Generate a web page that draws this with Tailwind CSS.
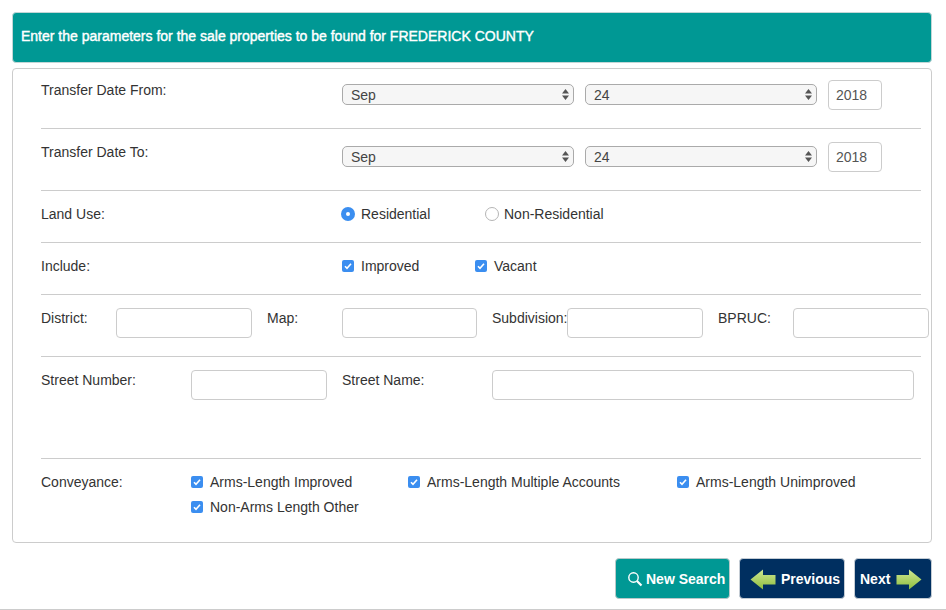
<!DOCTYPE html>
<html lang="en">
<head>
    <meta charset="UTF-8">
    <title>Sales Search</title>
    <script src="https://cdn.jsdelivr.net/npm/@tailwindcss/browser@4"></script>
</head>
<body class="bg-white text-[14px] leading-[20px] text-[#333] font-['Liberation_Sans',Arial,sans-serif]">
<div class="h-[610px] w-[946px] overflow-hidden border-b border-[#ccc] px-[12px] pt-[12px]">

    <!-- Header -->
    <div class="flex h-[51px] w-[920px] items-center rounded-[4px] border border-[#c2d6d6] bg-[#009894] pb-[4px] pl-[8px] text-white [-webkit-text-stroke:0.4px_white]">
        Enter the parameters for the sale properties to be found for FREDERICK COUNTY
    </div>

    <!-- Form panel -->
    <div class="mt-[5px] h-[475px] w-[920px] rounded-[4px] border border-[#ccc] pl-[28px]">

        <div class="flex h-[60px] w-[880px] items-start border-b border-[#ccc] pt-[11px]">
            <div class="w-[301px] shrink-0">Transfer Date From:</div>
            <div class="relative mt-[4px] h-[21px] w-[232px] shrink-0">
                <select class="h-full w-full appearance-none rounded-[5px] border border-[#aaa] bg-[#f6f6f6] pl-[8px] text-[14px] text-[#444]"><option>Sep</option></select>
                <svg class="pointer-events-none absolute right-[5px] top-[5px]" width="7" height="11" viewBox="0 0 7 11"><path d="M3.5 0L7 4.5H0Z M3.5 11L0 6.5H7Z" fill="#555"/></svg>
            </div>
            <div class="relative ml-[11px] mt-[4px] h-[21px] w-[232px] shrink-0">
                <select class="h-full w-full appearance-none rounded-[5px] border border-[#aaa] bg-[#f6f6f6] pl-[8px] text-[14px] text-[#444]"><option>24</option></select>
                <svg class="pointer-events-none absolute right-[5px] top-[5px]" width="7" height="11" viewBox="0 0 7 11"><path d="M3.5 0L7 4.5H0Z M3.5 11L0 6.5H7Z" fill="#555"/></svg>
            </div>
            <input type="text" value="2018" class="ml-[11px] h-[30px] w-[54px] shrink-0 rounded-[4px] border border-[#ccc] pl-[7px] text-[14px] text-[#555]">
        </div>

        <div class="flex h-[62px] w-[880px] items-start border-b border-[#ccc] pt-[13px]">
            <div class="w-[301px] shrink-0">Transfer Date To:</div>
            <div class="relative mt-[4px] h-[21px] w-[232px] shrink-0">
                <select class="h-full w-full appearance-none rounded-[5px] border border-[#aaa] bg-[#f6f6f6] pl-[8px] text-[14px] text-[#444]"><option>Sep</option></select>
                <svg class="pointer-events-none absolute right-[5px] top-[5px]" width="7" height="11" viewBox="0 0 7 11"><path d="M3.5 0L7 4.5H0Z M3.5 11L0 6.5H7Z" fill="#555"/></svg>
            </div>
            <div class="relative ml-[11px] mt-[4px] h-[21px] w-[232px] shrink-0">
                <select class="h-full w-full appearance-none rounded-[5px] border border-[#aaa] bg-[#f6f6f6] pl-[8px] text-[14px] text-[#444]"><option>24</option></select>
                <svg class="pointer-events-none absolute right-[5px] top-[5px]" width="7" height="11" viewBox="0 0 7 11"><path d="M3.5 0L7 4.5H0Z M3.5 11L0 6.5H7Z" fill="#555"/></svg>
            </div>
            <input type="text" value="2018" class="ml-[11px] h-[30px] w-[54px] shrink-0 rounded-[4px] border border-[#ccc] pl-[7px] text-[14px] text-[#555]">
        </div>

        <div class="flex h-[52px] w-[880px] items-start border-b border-[#ccc] pt-[13px]">
            <div class="w-[300px] shrink-0">Land Use:</div>
            <label class="flex w-[144px] shrink-0 items-center gap-[6px]">
                <span class="flex h-[14px] w-[14px] items-center justify-center rounded-full bg-[#3b8ef0]"><span class="h-[4px] w-[4px] rounded-full bg-white"></span></span>
                Residential
            </label>
            <label class="flex items-center gap-[5px]">
                <span class="h-[14px] w-[14px] rounded-full border border-[#b5b5b5] bg-white"></span>
                Non-Residential
            </label>
        </div>

        <div class="flex h-[52px] w-[880px] items-start border-b border-[#ccc] pt-[13px]">
            <div class="w-[301px] shrink-0">Include:</div>
            <label class="flex w-[133px] shrink-0 items-center gap-[7px]">
                <svg width="12" height="12" viewBox="0 0 12 12"><rect width="12" height="12" rx="2" fill="#3b8ef0"/><path d="M3 6.2L5 8.3L9 3.8" fill="none" stroke="#fff" stroke-width="1.6"/></svg>
                Improved
            </label>
            <label class="flex items-center gap-[7px]">
                <svg width="12" height="12" viewBox="0 0 12 12"><rect width="12" height="12" rx="2" fill="#3b8ef0"/><path d="M3 6.2L5 8.3L9 3.8" fill="none" stroke="#fff" stroke-width="1.6"/></svg>
                Vacant
            </label>
        </div>

        <div class="flex h-[62px] w-[880px] items-start border-b border-[#ccc] pt-[13px]">
            <div class="w-[75px] shrink-0">District:</div>
            <input type="text" class="h-[30px] w-[136px] shrink-0 rounded-[4px] border border-[#ccc]">
            <div class="ml-[15px] w-[75px] shrink-0">Map:</div>
            <input type="text" class="h-[30px] w-[135px] shrink-0 rounded-[4px] border border-[#ccc]">
            <div class="ml-[15px] w-[75px] shrink-0 whitespace-nowrap">Subdivision:</div>
            <input type="text" class="h-[30px] w-[136px] shrink-0 rounded-[4px] border border-[#ccc]">
            <div class="ml-[15px] w-[75px] shrink-0">BPRUC:</div>
            <input type="text" class="h-[30px] w-[136px] shrink-0 rounded-[4px] border border-[#ccc]">
        </div>

        <div class="flex h-[102px] w-[880px] items-start border-b border-[#ccc] pt-[13px]">
            <div class="w-[150px] shrink-0">Street Number:</div>
            <input type="text" class="h-[30px] w-[136px] shrink-0 rounded-[4px] border border-[#ccc]">
            <div class="ml-[15px] w-[150px] shrink-0">Street Name:</div>
            <input type="text" class="h-[30px] w-[422px] shrink-0 rounded-[4px] border border-[#ccc]">
        </div>

        <div class="flex w-[880px] pt-[13px]">
            <div class="w-[150px] shrink-0">Conveyance:</div>
            <div class="flex flex-col gap-[5px]">
                <div class="flex">
                    <label class="flex w-[217px] items-center gap-[7px]">
                        <svg width="12" height="12" viewBox="0 0 12 12"><rect width="12" height="12" rx="2" fill="#3b8ef0"/><path d="M3 6.2L5 8.3L9 3.8" fill="none" stroke="#fff" stroke-width="1.6"/></svg>
                        Arms-Length Improved
                    </label>
                    <label class="flex w-[269px] items-center gap-[7px]">
                        <svg width="12" height="12" viewBox="0 0 12 12"><rect width="12" height="12" rx="2" fill="#3b8ef0"/><path d="M3 6.2L5 8.3L9 3.8" fill="none" stroke="#fff" stroke-width="1.6"/></svg>
                        Arms-Length Multiple Accounts
                    </label>
                    <label class="flex items-center gap-[7px]">
                        <svg width="12" height="12" viewBox="0 0 12 12"><rect width="12" height="12" rx="2" fill="#3b8ef0"/><path d="M3 6.2L5 8.3L9 3.8" fill="none" stroke="#fff" stroke-width="1.6"/></svg>
                        Arms-Length Unimproved
                    </label>
                </div>
                <label class="flex items-center gap-[7px]">
                    <svg width="12" height="12" viewBox="0 0 12 12"><rect width="12" height="12" rx="2" fill="#3b8ef0"/><path d="M3 6.2L5 8.3L9 3.8" fill="none" stroke="#fff" stroke-width="1.6"/></svg>
                    Non-Arms Length Other
                </label>
            </div>
        </div>
    </div>

    <!-- Buttons -->
    <div class="mt-[15px] flex w-[920px] justify-end gap-[9px] font-bold text-white [text-shadow:0_0_1px_#fff]">
        <button class="flex h-[41px] w-[115px] shrink-0 items-center rounded-[4px] border border-[#b9c9c9] bg-[#009894] pl-[11px] pt-[1px]">
            <svg class="mr-[3px]" width="16" height="16" viewBox="0 0 16 16" fill="none" stroke="#fff"><circle cx="6.5" cy="6.5" r="4.7" stroke-width="1.4"/><path d="M10 10L14.5 14.5" stroke-width="2.2"/></svg>
            New Search
        </button>
        <button class="flex h-[41px] w-[106px] shrink-0 items-center rounded-[4px] border border-[#c4ccd4] bg-[#002f60] pl-[10px] pt-[1px]">
            <svg class="mr-[5px]" width="26" height="21" viewBox="0 0 26 21"><defs><linearGradient id="arrowLeft" x1="0" y1="0" x2="0" y2="1"><stop offset="0" stop-color="#cfe792"/><stop offset="1" stop-color="#8dbd3e"/></linearGradient></defs><path d="M0.5 10.5L13 0.5V6H25.5V15.5H13V20.5Z" fill="url(#arrowLeft)"/></svg>
            Previous
        </button>
        <button class="flex h-[41px] w-[78px] shrink-0 items-center rounded-[4px] border border-[#c4ccd4] bg-[#002f60] pl-[5px] pt-[1px]">
            Next
            <svg class="ml-[6px]" width="26" height="21" viewBox="0 0 26 21"><defs><linearGradient id="arrowRight" x1="0" y1="0" x2="0" y2="1"><stop offset="0" stop-color="#cfe792"/><stop offset="1" stop-color="#8dbd3e"/></linearGradient></defs><path d="M25.5 10.5L13 0.5V6H0.5V15.5H13V20.5Z" fill="url(#arrowRight)"/></svg>
        </button>
    </div>
</div>
</body>
</html>
